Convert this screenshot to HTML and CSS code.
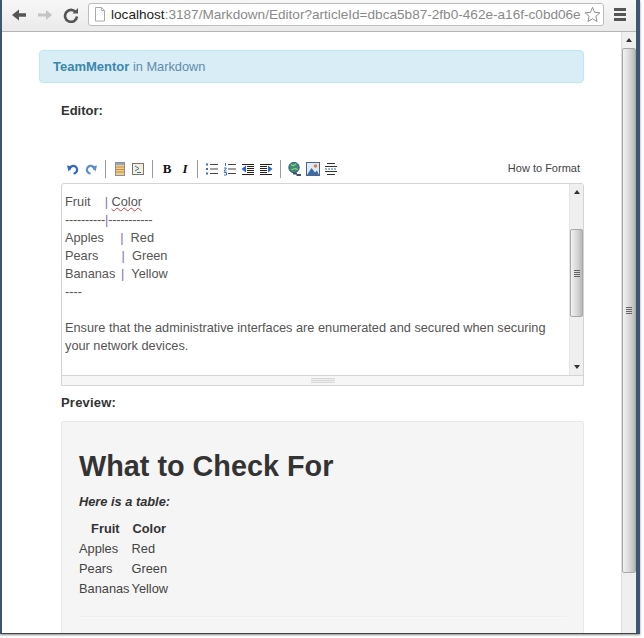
FILE: index.html
```html
<!DOCTYPE html>
<html lang="en">
<head>
<meta charset="utf-8">
<title>TeamMentor in Markdown</title>
<link rel="stylesheet" href="styles.css">
</head>
<body>
<div class="window">
  <header class="chrome">
    <svg class="nav" viewBox="0 0 16 16"><path d="M15 6.200H8V2.500L1 8 8 13.500V9.800H15Z" fill="#555"/></svg>
    <svg class="nav" viewBox="0 0 16 16"><path d="M1 6.500H9V3L15 8 9 13V9.500H1Z" fill="#c4c4c4"/></svg>
    <svg class="nav" viewBox="0 0 16 16"><path d="M13 5.500A6 6 0 1 0 14 9.500" fill="none" stroke="#555" stroke-width="2.600"/><path d="M9.500 6.500H15V1Z" fill="#555"/></svg>
    <div class="omnibox">
      <svg class="page-icon" viewBox="0 0 12 15"><path d="M1.500 .5H7.500L10.500 3.500V14H1.500Z" fill="#fff" stroke="#aaa"/><path d="M7.500 .5V3.500H10.500" fill="none" stroke="#aaa"/></svg>
      <span class="url"><b>localhost</b>:3187/Markdown/Editor?articleId=dbca5b87-2fb0-462e-a16f-c0bd06e</span>
      <svg class="star" viewBox="0 0 18 18"><path d="M9 1.500 11.200 6.700 16.800 7.200 12.600 10.900 13.800 16.400 9 13.500 4.200 16.400 5.400 10.900 1.200 7.200 6.800 6.700Z" fill="#fff" stroke="#888"/></svg>
    </div>
    <div class="menu"><i></i><i></i><i></i></div>
  </header>
  <div class="viewport">
    <main class="page">
      <div class="alert"><strong>TeamMentor</strong> in Markdown</div>
      <section class="content">
        <h4 class="label editor-label">Editor:</h4>
        <div class="toolbar">
          <button class="tool"><svg viewBox="0 0 14 14"><path d="M3.500 8A3.800 3.800 0 1 1 7.500 11.500" fill="none" stroke="#3568c0" stroke-width="2.200"/><path d="M1 3.500 6.500 4.500 2.500 9.500Z" fill="#3568c0"/></svg></button>
          <button class="tool"><svg viewBox="0 0 14 14"><path d="M10.500 8A3.800 3.800 0 1 0 6.500 11.500" fill="none" stroke="#5f8cd2" stroke-width="2.200"/><path d="M13 3.500 7.500 4.500 11.500 9.500Z" fill="#5f8cd2"/></svg></button>
          <span class="sep"></span>
          <button class="tool"><svg viewBox="0 0 14 14"><rect x="2.500" y=".5" width="9" height="13" fill="#f2cf85" stroke="#8a8f99"/><rect x="3" y="1" width="8" height="2" fill="#8fa5c4"/><path d="M3 5H11M3 7.500H11M3 10H11" stroke="#b98f4c"/></svg></button>
          <button class="tool"><svg viewBox="0 0 14 14"><rect x="1.500" y="1.500" width="11" height="11" fill="#f3efd8" stroke="#77776a"/><path d="M4 4 8 6.500 4 9M6 10.500H10" fill="none" stroke="#3b6fc4"/></svg></button>
          <span class="sep"></span>
          <button class="tool glyph bold">B</button>
          <button class="tool glyph italic">I</button>
          <span class="sep sep-tight"></span>
          <button class="tool"><svg viewBox="0 0 14 14"><path d="M5 2.500H13M5 7H13M5 11.500H13" stroke="#444"/><path d="M1 1.500H3V3.500H1ZM1 6H3V8H1ZM1 10.500H3V12.500H1Z" fill="#3b6fc4"/></svg></button>
          <button class="tool"><svg viewBox="0 0 14 14"><path d="M5 2.500H13M5 7H13M5 11.500H13" stroke="#444"/><path d="M2.500 1V4M1 6H3.500L1 9H3.500M1 10.500H3.500V13H1" fill="none" stroke="#3b6fc4"/></svg></button>
          <button class="tool"><svg viewBox="0 0 14 14"><path d="M1 2.500H13M6 4.500H13M6 6.500H13M6 8.500H13M6 10.500H13M1 12.500H13" stroke="#222"/><path d="M.5 7 5 3.500V10.500Z" fill="#2f69c8"/></svg></button>
          <button class="tool"><svg viewBox="0 0 14 14"><path d="M1 2.500H13M1 4.500H8M1 6.500H8M1 8.500H8M1 10.500H8M1 12.500H13" stroke="#222"/><path d="M13.500 7 9 3.500V10.500Z" fill="#2f69c8"/></svg></button>
          <span class="sep"></span>
          <button class="tool"><svg viewBox="0 0 14 14"><circle cx="6" cy="5.500" r="5.200" fill="#3f8a70" stroke="#2b5f8a"/><path d="M3 2.500Q6 5 8 1.500M3.500 8Q7 5.500 9.500 7.500" fill="none" stroke="#8fce7e" stroke-width="1.300"/><path d="M5 11.500H9M8.500 13H13" stroke="#3c4f70" stroke-width="2"/></svg></button>
          <button class="tool"><svg viewBox="0 0 14 14"><rect x=".5" y=".5" width="13" height="13" fill="#dfeaf5" stroke="#4f6488"/><circle cx="9.500" cy="4" r="1.800" fill="#e0803f"/><path d="M1 13 5.500 6 9 10.500 11 8.500 13 13Z" fill="#3a6aa8"/></svg></button>
          <button class="tool"><svg viewBox="0 0 14 14"><path d="M3 1.500H11M1 4.500H13M3 12.500H11M1 9.500H13" stroke="#333"/><path d="M1 7H13" stroke="#3b6fc4" stroke-dasharray="2 1"/></svg></button>
          <a class="how-to">How to Format</a>
        </div>
        <div class="editor">
          <div class="editor-main">
            <div class="editor-text">
              <div>Fruit&nbsp;&nbsp;&nbsp;&nbsp;<span class="pipe">|</span> <span class="misspelt">Color</span></div>
              <div class="rule">----------<span class="pipe">|</span>-----------</div>
              <div>Apples&nbsp;&nbsp;&nbsp;&nbsp;&nbsp;<span class="pipe pipe-tight">|</span>&nbsp;&nbsp;Red</div>
              <div>Pears&nbsp;&nbsp;&nbsp;&nbsp;&nbsp;&nbsp;&nbsp;<span class="pipe pipe-tight">|</span>&nbsp;&nbsp;Green</div>
              <div>Bananas&nbsp;&nbsp;<span class="pipe pipe-tight">|</span>&nbsp;&nbsp;Yellow</div>
              <div>----</div>
              <div class="blank"></div>
              <div>Ensure that the administrative interfaces are enumerated and secured when securing your network devices.</div>
            </div>
            <div class="scrollbar inner-bar">
              <span class="arrow up"></span>
              <div class="track inner-track"><div class="thumb inner-thumb"><span class="grip"><i></i><i></i><i></i><i></i></span></div></div>
              <span class="arrow down"></span>
            </div>
          </div>
          <div class="resize"><span class="handle"></span></div>
        </div>
        <h4 class="label preview-label">Preview:</h4>
        <div class="preview">
          <h1>What to Check For</h1>
          <p class="intro">Here is a table:</p>
          <table>
            <thead><tr><th class="fruit">Fruit</th><th class="left">Color</th></tr></thead>
            <tbody>
              <tr><td>Apples</td><td>Red</td></tr>
              <tr><td>Pears</td><td>Green</td></tr>
              <tr><td>Bananas</td><td>Yellow</td></tr>
            </tbody>
          </table>
          <hr>
        </div>
      </section>
    </main>
    <div class="scrollbar page-bar">
      <span class="arrow up"></span>
      <div class="track page-track"><div class="thumb page-thumb"><span class="grip"><i></i><i></i><i></i><i></i></span></div></div>
    </div>
  </div>
</div>
</body>
</html>
```
FILE: styles.css
```css
* { box-sizing: border-box; }
html, body { margin: 0; height: 100%; background: #fff; overflow: hidden; }
body { padding: 0 4px 4px 0; font-family: "Liberation Sans", Arial, sans-serif; }

.window {
  height: 634px;
  display: flex;
  flex-direction: column;
  border-left: 2px solid #3e5675;
  border-right: 4px solid #3e5675;
  border-bottom: 1px solid #444;
  box-shadow: 0 1px 2px #888;
  overflow: hidden;
}

.chrome {
  height: 32px;
  flex: none;
  display: flex;
  align-items: flex-start;
  padding: 3px 0 0 9px;
  background: linear-gradient(#f7f7f7, #eaeaea);
  border-bottom: 1px solid #b4b4b4;
}
.nav { width: 16px; height: 16px; margin: 4px 10px 0 0; flex: none; }
.omnibox {
  width: 516px;
  height: 23px;
  margin-left: -1px;
  display: flex;
  align-items: center;
  padding-left: 5px;
  background: #fff;
  border: 1px solid #bdbdbd;
  border-radius: 3px;
}
.page-icon { width: 12px; height: 15px; flex: none; }
.url { margin-left: 5px; font-size: 13.600px; color: #8a8a8a; white-space: nowrap; flex: none; width: 472px; }
.url b { font-weight: 400; color: #222; }
.star { width: 17px; height: 17px; flex: none; margin-left: 1px; }
.menu { margin: 5px 0 0 10px; width: 12px; display: flex; flex-direction: column; gap: 2px; }
.menu i { height: 3px; background: #555; }

.viewport { flex: 1; min-height: 0; display: flex; background: #fff; }
.page { flex: 1; min-width: 0; padding: 18px 37px 0; overflow: hidden; }

.alert {
  height: 33px;
  padding: 8px 13px;
  font-size: 12.800px;
  line-height: 16px;
  color: #5f8cab;
  background: #d9edf7;
  border: 1px solid #bce8f1;
  border-radius: 4px;
}
.alert strong { color: #3a87ad; font-size: 13px; }

.content { padding-left: 22px; }
.label { margin: 0; font-size: 13px; line-height: 16px; font-weight: 700; color: #333; }
.editor-label { margin-top: 20px; }
.preview-label { margin-top: 9px; letter-spacing: .2px; }

.toolbar { display: flex; align-items: center; height: 18px; margin-top: 41px; padding-left: 3px; }
.tool {
  width: 18px;
  height: 18px;
  flex: none;
  padding: 2px;
  border: 0;
  background: none;
  display: flex;
  align-items: center;
  justify-content: center;
}
.tool svg { width: 14px; height: 14px; display: block; }
.glyph { font-family: "Liberation Serif", serif; font-size: 13px; color: #111; font-weight: 700; }
.italic { font-style: italic; }
.sep { width: 1px; height: 18px; margin: 0 5px; background: #9a9a9a; flex: none; }
.sep-tight { margin: 0 5px 0 3px; }
.how-to { margin: 0 0 2px auto; padding-right: 4px; font-size: 11px; color: #444; }

.editor { margin-top: 5px; border: 1px solid #d4d4d4; border-radius: 3px 3px 0 0; }
.editor-main { display: flex; height: 192px; border-bottom: 1px solid #d4d4d4; }
.editor-text { flex: 1; min-width: 0; padding: 9px 20px 0 3px; font-size: 12.750px; line-height: 18px; color: #555; }
.blank { height: 18px; }
.rule { letter-spacing: -.24px; }
.pipe { color: #8a6db5; }
.pipe-tight { margin-left: -1.500px; }
.misspelt { text-decoration: underline wavy #d04040 1px; }

.scrollbar { display: flex; flex-direction: column; align-items: center; background: #efefef; flex: none; }
.inner-bar { width: 14px; border-left: 1px solid #e4e4e4; }
.arrow { width: 0; height: 0; border-left: 3px solid transparent; border-right: 3px solid transparent; flex: none; }
.arrow.up { border-bottom: 4px solid #333; margin: 6px 0; }
.arrow.down { border-top: 4px solid #333; margin: 6px 0; }
.track { flex: 1; width: 100%; min-height: 0; }
.thumb {
  display: flex;
  align-items: center;
  justify-content: center;
  background: linear-gradient(90deg, #f2f2f2, #d4d4d4 60%, #b8b8b8);
  border: 1px solid #a8a8a8;
  border-radius: 2px;
}
.grip { display: flex; flex-direction: column; gap: 1px; width: 6px; }
.grip i { height: 1px; background: #666; }
.inner-track { padding-top: 29px; }
.inner-thumb { height: 88px; }
.resize { height: 9px; display: flex; justify-content: center; background: #f6f6f6; padding-top: 2px; }
.handle { width: 24px; height: 5px; background: repeating-linear-gradient(#d8d8d8 0 1px, #eee 1px 2px); }

.preview {
  margin-top: 10px;
  height: 240px;
  padding: 0 17px;
  background: #f5f5f5;
  border: 1px solid #e8e8e8;
  border-bottom: 0;
  border-radius: 3px 3px 0 0;
  color: #444;
}
.preview h1 { margin: 26px 0 0; font-size: 28.800px; line-height: 36px; color: #333; font-weight: 700; }
.intro { margin: 10px 0 0; font-size: 12.800px; line-height: 16px; font-weight: 700; font-style: italic; color: #333; }
table { margin-top: 9px; border-collapse: collapse; font-size: 12.800px; }
th, td { padding: 0 2px 0 0; height: 20px; line-height: 20px; text-align: left; }
th { color: #333; }
th.fruit { text-align: right; padding-right: 12px; }
th.left { padding-left: 1px; }
hr { margin: 17px 0 0; border: 0; border-top: 1px solid #eee; border-bottom: 1px solid #fafafa; }

.page-bar { width: 15px; border-left: 1px solid #ddd; }
.page-thumb { height: 525px; }
```
